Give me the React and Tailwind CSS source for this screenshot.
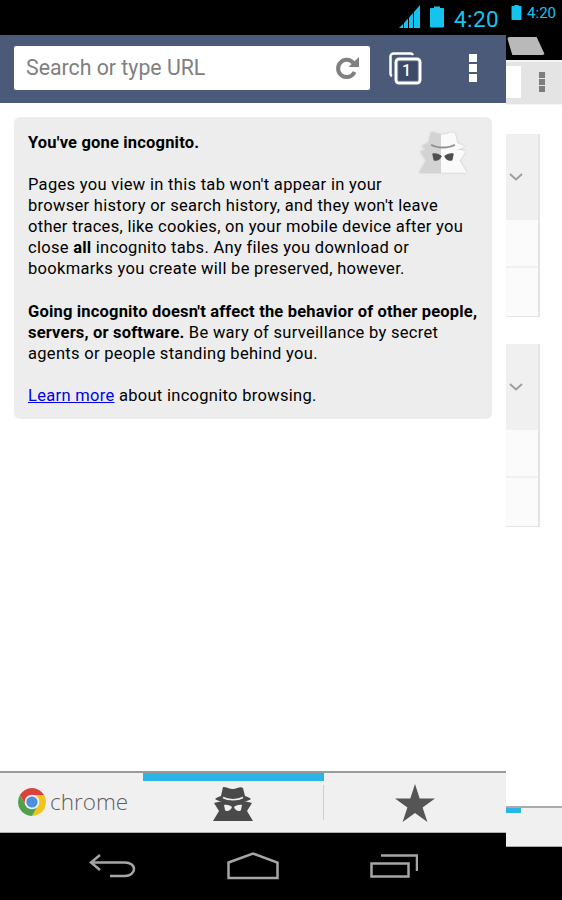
import { useId } from "react";

const roboto = "font-['Roboto',sans-serif]";

function Signal() {
  return (
    <svg width="22" height="23" viewBox="0 0 22 23" fill="#14c4ee">
      <path d="M0 23 L4 19 V23 Z M5 18 L9 13.5 V23 H5 Z M10 12.5 L14 8 V23 H10 Z M15 7 L21 0 V23 H15 Z" />
    </svg>
  );
}

function Battery({ w, h }) {
  return (
    <svg width={w} height={h} viewBox="0 0 14 21" fill="#14c4ee">
      <path d="M4 0 H10 V1.5 H13 A1 1 0 0 1 14 2.5 V20 A1 1 0 0 1 13 21 H1 A1 1 0 0 1 0 20 V2.5 A1 1 0 0 1 1 1.5 H4 Z" />
    </svg>
  );
}

function Reload() {
  return (
    <svg width="26" height="26" viewBox="0 0 26 26" fill="none">
      <path d="M19.5 8.2 A8.6 8.6 0 1 0 20.5 17" stroke="#808080" strokeWidth="4" />
      <path d="M14.5 12 L25 2 V12 Z" fill="#808080" />
    </svg>
  );
}

function TabCount() {
  return (
    <svg width="33" height="33" viewBox="0 0 33 33" fill="none">
      <path d="M24 3 A2.5 2.5 0 0 0 22 1.5 H4.5 A3 3 0 0 0 1.5 4.5 V22 A2.5 2.5 0 0 0 3 24" stroke="#fff" strokeWidth="2.5" />
      <rect x="7" y="7" width="24" height="24" rx="3" fill="#4a5a78" stroke="#fff" strokeWidth="3" />
      <rect x="10" y="10" width="18" height="18" fill="#3b4a66" />
    </svg>
  );
}

function Dots({ color, size, gap }) {
  const dots = [0, 1, 2];
  return (
    <div className={`flex flex-col ${gap}`}>
      {dots.map((d) => (
        <div key={d} className={`${size} ${color}`} />
      ))}
    </div>
  );
}

// same figure in both places, only the colours differ
function Spy({ width, height, fill, band, eyes }) {
  return (
    <svg width={width} height={height} viewBox="0 0 40 36">
      <path d="M1 17 L9 15 L31 15 L39 17 L34 25 L40 35 H0 L6 25 Z" fill={fill} />
      <path d="M10 1 C14 1 16 3 20 3 C24 3 27 0 30 2 L32 10 C35 11 37 12 38 13 C30 18 10 18 2 13 C3 12 5 11 8 10 Z" fill={fill} />
      <path d="M10 11.5 C15 14.5 25 14.5 30 11.5" fill="none" stroke={band} strokeWidth="1.6" />
      <path d="M11 19 C14 18 18 20 19 21 C18 25 13 26 12 24 Z M29 19 C26 18 22 20 21 21 C22 25 27 26 28 24 Z" fill={eyes} />
    </svg>
  );
}

function SpyFaded() {
  const id = useId();
  return (
    <div className="[filter:drop-shadow(0_0_1px_#c4c4c4)]">
      <svg width="0" height="0" className="absolute">
        <defs>
          <linearGradient id={id} x1="0" x2="1" y1="0" y2="0">
            <stop offset="0.46" stopColor="#d2d3d2" />
            <stop offset="0.46" stopColor="#fafafa" />
          </linearGradient>
        </defs>
      </svg>
      <Spy width={50} height={43} fill={`url(#${id})`} band="#8f8f8f" eyes="#4f4f4f" />
    </div>
  );
}

function ChromeLogo() {
  return (
    <svg width="28" height="28" viewBox="4 4 40 40">
      <path d="M6.68 14 A20 20 0 0 1 41.32 14 H24 L15.34 29 Z" fill="#d9423a" />
      <path d="M41.32 14 A20 20 0 0 1 24 44 L32.66 29 L24 14 Z" fill="#f2c31c" />
      <path d="M24 44 A20 20 0 0 1 6.68 14 L15.34 29 H32.66 Z" fill="#4fa24b" />
      <circle cx="24" cy="24" r="10.5" fill="#f1f1f1" />
      <circle cx="24" cy="24" r="8" fill="#4d8fe0" />
    </svg>
  );
}

function BackIcon() {
  return (
    <svg width="48" height="26" viewBox="0 0 48 26" fill="none" stroke="#a6a6a6" strokeWidth="2.5">
      <path d="M11 2 L2 9.5 L11 17" />
      <path d="M2 9.5 H36 C41 9.5 45 12 45 16 C45 20 41 23 36 23 H21" />
    </svg>
  );
}

function HomeIcon() {
  return (
    <svg width="52" height="28" viewBox="0 0 52 28" fill="none" stroke="#a6a6a6" strokeWidth="2.5">
      <path d="M1.5 10.5 L26 1.5 L50.5 10.5 V26 H1.5 Z" />
    </svg>
  );
}

function RecentsIcon() {
  return (
    <svg width="48" height="24" viewBox="0 0 48 24" fill="none" stroke="#a6a6a6" strokeWidth="2.5">
      <rect x="1.5" y="9.5" width="37" height="13" />
      <path d="M11 1.5 H47 V17" />
    </svg>
  );
}

function SideCard() {
  return (
    <div className="w-[34px] border-r-2 border-b border-[#e4e4e4]">
      <div className="h-[86px] bg-[#f0f0f0] flex items-center pl-[3px]">
        <svg width="14" height="8" viewBox="0 0 14 8" fill="none" stroke="#9c9c9c" strokeWidth="1.8">
          <path d="M1 1 L7 6.5 L13 1" />
        </svg>
      </div>
      <div className="h-[48px] bg-[#fbfbfb] border-b-2 border-[#f0f0f0]" />
      <div className="h-[48px] bg-[#fbfbfb]" />
    </div>
  );
}

export default function App() {
  return (
    <div className={`w-[562px] h-[900px] bg-black flex flex-col overflow-hidden ${roboto}`}>
      {/* status bar */}
      <div className="h-[35px] flex justify-end items-start text-[#14c4ee]">
        <div className="mt-[5px]"><Signal /></div>
        <div className="ml-[9px] mt-[6px]"><Battery w={14} h={22} /></div>
        <span className="ml-[10px] mt-[5px] text-[22.5px] leading-[28px] tracking-[0.4px]">4:20</span>
        <div className="ml-[12px] mt-[5px]"><Battery w={11} h={15} /></div>
        <span className="ml-[5px] mr-[6px] mt-[3px] text-[15px] leading-[20px]">4:20</span>
      </div>

      <div className="flex-1 flex min-h-0">
        {/* incognito tab */}
        <div className="w-[506px] flex flex-col">
          <div className="h-[68px] bg-[#4a5a78] flex items-start pt-[11px] pl-[14px]">
            <div className="w-[356px] h-[44px] bg-white rounded-[2px] flex items-center justify-between pl-[12px] pr-[10px] text-[21.3px] text-[#808080]">
              <span>Search or type URL</span>
              <Reload />
            </div>
            <div className="relative ml-[19px] mt-[6px]">
              <TabCount />
              <span className="absolute left-[13px] top-[9px] text-[16px] leading-[20px] font-medium text-white">1</span>
            </div>
            <div className="ml-[47px] mt-[8px]">
              <Dots color="bg-white" size="w-[8px] h-[8px]" gap="gap-[2px]" />
            </div>
          </div>

          <div className="flex-1 bg-white pt-[14px] px-[14px]">
            <div className="h-[302px] bg-[#ecedec] rounded-[6px] px-[14px] pt-[15px] text-[16.5px] leading-[21px] tracking-[0.3px] text-black">
              <div className="float-right mr-[10px] -mt-[1px]"><SpyFaded /></div>
              <p className="font-bold tracking-[0.18px]">You've gone incognito.</p>
              <p className="mt-[21px]">
                Pages you view in this tab won't appear in your<br />
                browser history or search history, and they won't leave<br />
                other traces, like cookies, on your mobile device after you<br />
                close <b className="tracking-[0.18px]">all</b> incognito tabs. Any files you download or<br />
                bookmarks you create will be preserved, however.
              </p>
              <p className="mt-[22px]">
                <b className="tracking-[0.18px]">Going incognito doesn't affect the behavior of other people,</b><br />
                <b className="tracking-[0.18px]">servers, or software.</b> Be wary of surveillance by secret<br />
                agents or people standing behind you.
              </p>
              <p className="mt-[21px]">
                <a className="text-[#0000ee] underline">Learn more</a> about incognito browsing.
              </p>
            </div>
          </div>

          {/* bottom bar */}
          <div className="h-[62px] bg-[#f0f0f0] border-t-2 border-t-[#9a9a9a] border-b border-b-[#b0b0b0] flex">
            <div className="w-[143px] flex items-center pl-[18px] pb-[1px]">
              <ChromeLogo />
              <span className="ml-[4px] font-['Open_Sans',sans-serif] font-light text-[22.5px] text-[#5f5f5f]">chrome</span>
            </div>
            <div className="w-[180px] flex flex-col items-center">
              <div className="w-[181px] h-[8px] bg-[#2bb5e6] shrink-0" />
              <div className="mt-[5px]"><Spy width={40} height={36} fill="#4a4a4a" band="#f0f0f0" eyes="#f0f0f0" /></div>
            </div>
            <div className="w-[183px] flex items-center justify-center border-l border-[#cfcfcf] my-[12px]">
              <svg width="40" height="38" viewBox="0 0 40 38" fill="#555555">
                <path d="M20 0 L24.7 14.5 H40 L27.6 23.5 L32.4 38 L20 29 L7.6 38 L12.4 23.5 L0 14.5 H15.3 Z" />
              </svg>
            </div>
          </div>

          <div className="h-[67px] bg-black flex items-center pl-[89px] pb-[2px]">
            <BackIcon />
            <div className="ml-[90px]"><HomeIcon /></div>
            <div className="ml-[91px]"><RecentsIcon /></div>
          </div>
        </div>

        {/* next tab peeking out */}
        <div className="w-[56px] flex flex-col">
          <div className="h-[25px] bg-black pl-[1px] pt-[2px]">
            <div className="w-[38px] h-[18px] bg-[#b9b9b9] rounded-[3px] [clip-path:polygon(0_0,78%_0,100%_100%,14%_100%)]" />
          </div>
          <div className="h-[45px] bg-[#e4e4e4] border-t-2 border-b border-[#f5f5f5] flex items-start pt-[4px]">
            <div className="w-[15px] h-[32px] bg-white" />
            <div className="ml-[18px] mt-[6px]">
              <Dots color="bg-[#7d7d7d]" size="w-[6px] h-[6px]" gap="gap-[1px]" />
            </div>
          </div>
          <div className="h-[742px] bg-white flex flex-col">
            <div className="mt-[29px]"><SideCard /></div>
            <div className="mt-[27px]"><SideCard /></div>
            <div className="mt-auto h-[41px] bg-[#f0f0f0] border-t-2 border-b border-[#aaaaaa] relative">
              <div className="absolute left-0 top-0 w-[15px] h-[5px] bg-[#2bb5e6]" />
            </div>
          </div>
          <div className="flex-1 bg-black" />
        </div>
      </div>
    </div>
  );
}
